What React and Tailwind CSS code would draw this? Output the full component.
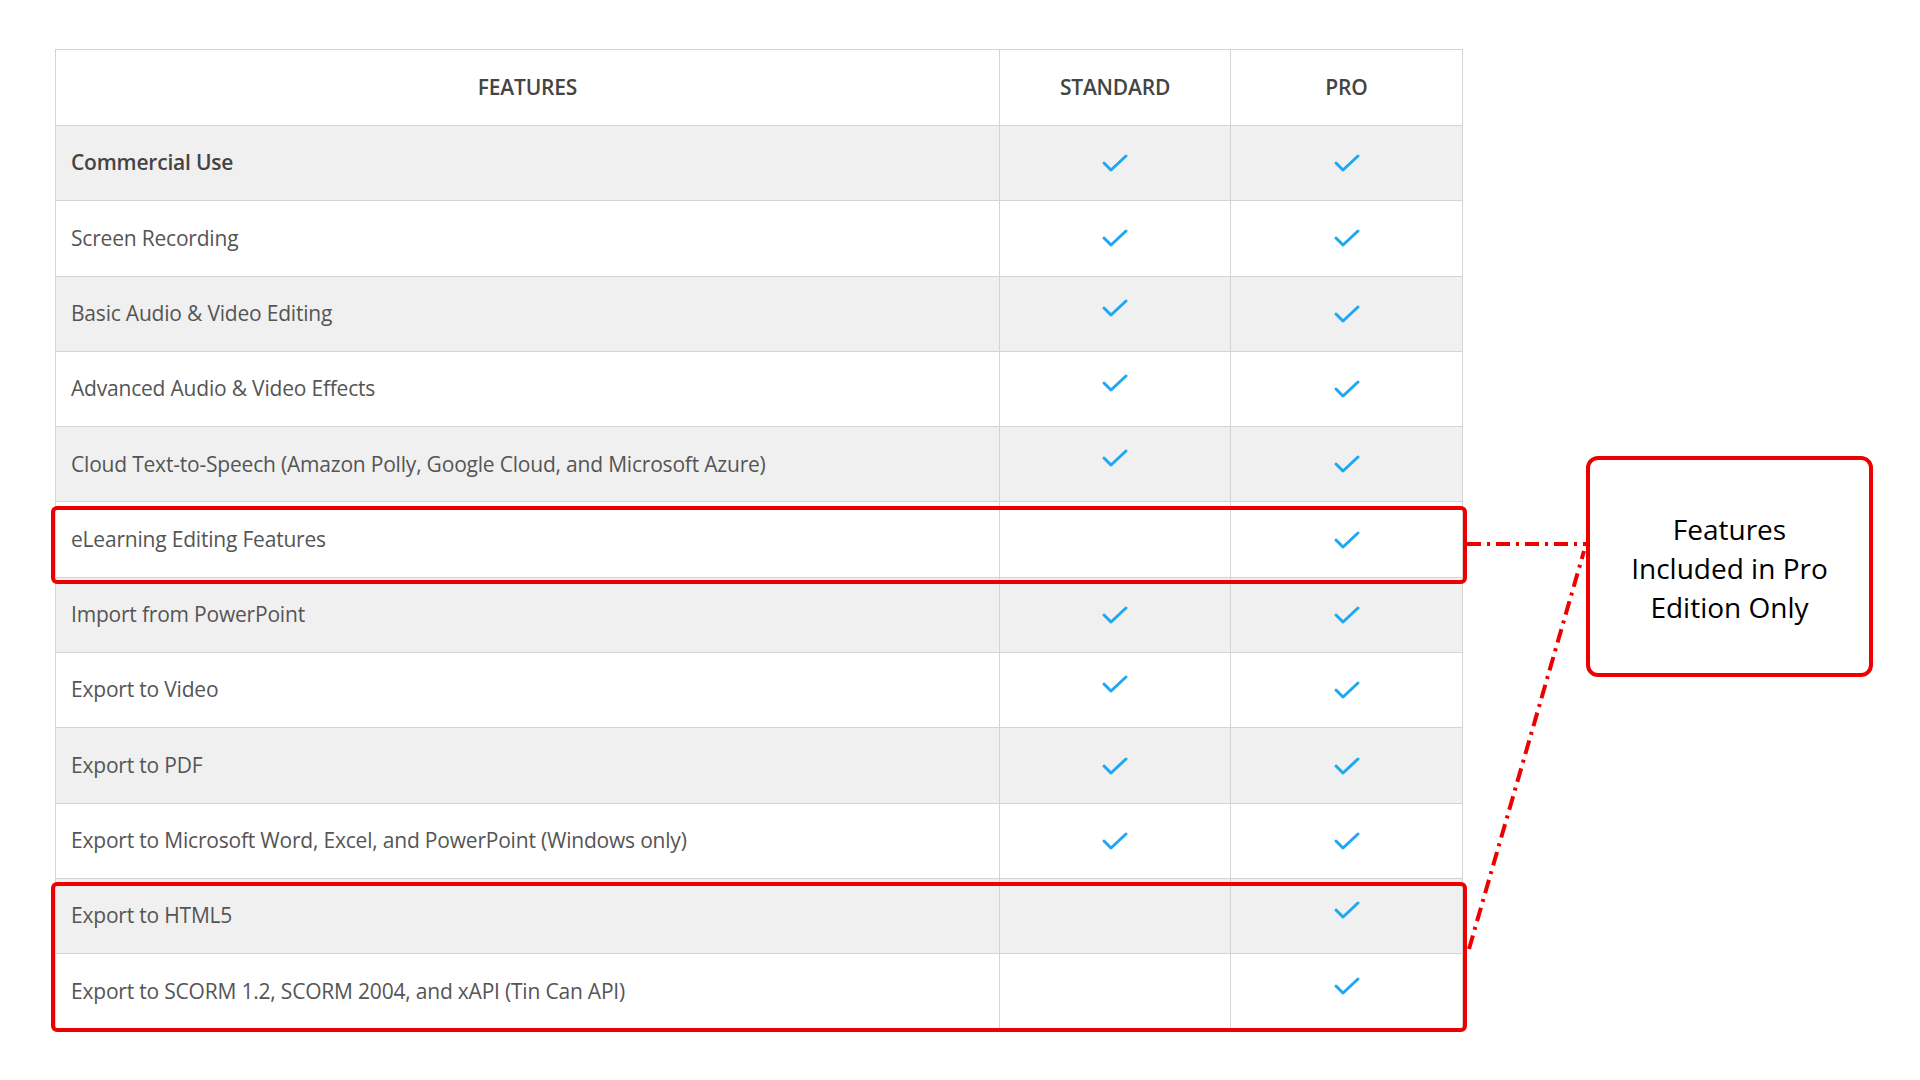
const rows = [
  { name: "Commercial Use", bold: true, std: true },
  { name: "Screen Recording", std: true },
  { name: "Basic Audio & Video Editing", std: true, up: true },
  { name: "Advanced Audio & Video Effects", std: true, up: true },
  { name: "Cloud Text-to-Speech (Amazon Polly, Google Cloud, and Microsoft Azure)", std: true, up: true },
  { name: "eLearning Editing Features", std: false },
  { name: "Import from PowerPoint", std: true },
  { name: "Export to Video", std: true, up: true },
  { name: "Export to PDF", std: true },
  { name: "Export to Microsoft Word, Excel, and PowerPoint (Windows only)", std: true },
  { name: "Export to HTML5", std: false, proUp: true },
  { name: "Export to SCORM 1.2, SCORM 2004, and xAPI (Tin Can API)", std: false, proUp: true },
];

function Check({ up }) {
  return (
    <svg width="28" height="20" viewBox="0 0 28 20" className={up ? "-translate-y-1.5" : ""}>
      <path d="M3 10 L10 17 L25 3" fill="none" stroke="#1ea7f5" strokeWidth="3" strokeLinecap="round" strokeLinejoin="round" />
    </svg>
  );
}

export default function App() {
  return (
    <div className="relative w-[1920px] h-[1080px] bg-white" style={{ fontFamily: '"Open Sans", sans-serif' }}>
      <div className="absolute left-[55px] top-[49px] w-[1408px] border border-[#d4d4d4] text-[21px] tracking-[-0.2px] text-[#555]">
        <div className="flex h-[76px] bg-white border-b border-[#d4d4d4] font-semibold text-[#444]">
          <div className="w-[944px] flex items-center justify-center border-r border-[#d4d4d4]">FEATURES</div>
          <div className="w-[231px] flex items-center justify-center border-r border-[#d4d4d4]">STANDARD</div>
          <div className="flex-1 flex items-center justify-center">PRO</div>
        </div>
        {rows.map((r, i) => (
          <div key={i} className={"flex h-[75.3px] border-b border-[#d4d4d4] last:border-b-0 " + (i % 2 === 0 && i !== 5 ? "bg-[#f0f0f0]" : "bg-white")}>
            <div className={"w-[944px] flex items-center pl-[15px] border-r border-[#d4d4d4] " + (r.bold ? "font-semibold text-[#444]" : "")}>{r.name}</div>
            <div className="w-[231px] flex items-center justify-center border-r border-[#d4d4d4]">{r.std && <Check up={r.up} />}</div>
            <div className="flex-1 flex items-center justify-center"><Check up={r.proUp} /></div>
          </div>
        ))}
      </div>

      <div className="absolute left-[51px] top-[506px] w-[1416px] h-[78px] border-4 border-[#ee0000] rounded-md" />
      <div className="absolute left-[51px] top-[882px] w-[1416px] h-[150px] border-4 border-[#ee0000] rounded-md" />

      <svg className="absolute left-0 top-0" width="1920" height="1080">
        <path d="M1467 544 L1586 544" stroke="#ee0000" strokeWidth="4" strokeDasharray="14 6 3 6" fill="none" />
        <path d="M1469 949 L1584 551" stroke="#ee0000" strokeWidth="4" strokeDasharray="14 6 3 6" fill="none" />
      </svg>

      <div className="absolute left-[1586px] top-[456px] w-[287px] h-[221px] border-4 border-[#ee0000] rounded-xl bg-white flex items-start justify-center pt-[50px] text-center text-[28px] leading-[39px] font-medium text-black">
        <div>Features<br />Included in Pro<br />Edition Only</div>
      </div>
    </div>
  );
}
